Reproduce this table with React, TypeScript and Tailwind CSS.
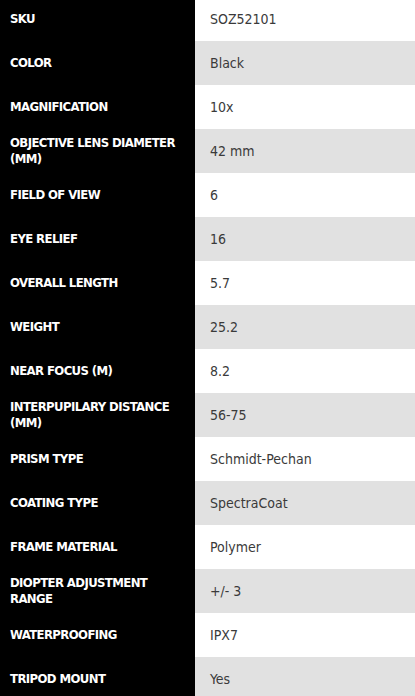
import React from 'react';

const specs: [string, string][] = [
  ['SKU', 'SOZ52101'],
  ['Color', 'Black'],
  ['Magnification', '10x'],
  ['Objective Lens Diameter (mm)', '42 mm'],
  ['Field of View', '6'],
  ['Eye Relief', '16'],
  ['Overall Length', '5.7'],
  ['Weight', '25.2'],
  ['Near Focus (m)', '8.2'],
  ['Interpupilary Distance (mm)', '56-75'],
  ['Prism Type', 'Schmidt-Pechan'],
  ['Coating Type', 'SpectraCoat'],
  ['Frame Material', 'Polymer'],
  ['Diopter Adjustment Range', '+/- 3'],
  ['Waterproofing', 'IPX7'],
  ['Tripod Mount', 'Yes'],
];

const App: React.FC = () => {
  return (
    <div className="w-[415px] h-[696px] overflow-hidden bg-white">
      {/* Spec table */}
      <div className="-mt-[3px] flex flex-col">
        {specs.map(([label, value], i) => (
          <div key={label} className="flex h-[44px]">
            <div className="w-[195px] shrink-0 bg-black flex items-center pl-[10px] pr-2">
              <span className="text-white font-bold uppercase text-[13px] leading-[16px] font-['DejaVu_Sans_Condensed',sans-serif] tracking-[-0.6px]">
                {label}
              </span>
            </div>
            <div
              className={`flex-1 flex items-center pl-[15px] ${
                i % 2 === 1 ? 'bg-[#e1e1e1]' : 'bg-white'
              }`}
            >
              <span className="text-[#3a3a3a] text-[14px] font-['DejaVu_Sans_Condensed',sans-serif]">
                {value}
              </span>
            </div>
          </div>
        ))}
      </div>
    </div>
  );
};

export default App;
